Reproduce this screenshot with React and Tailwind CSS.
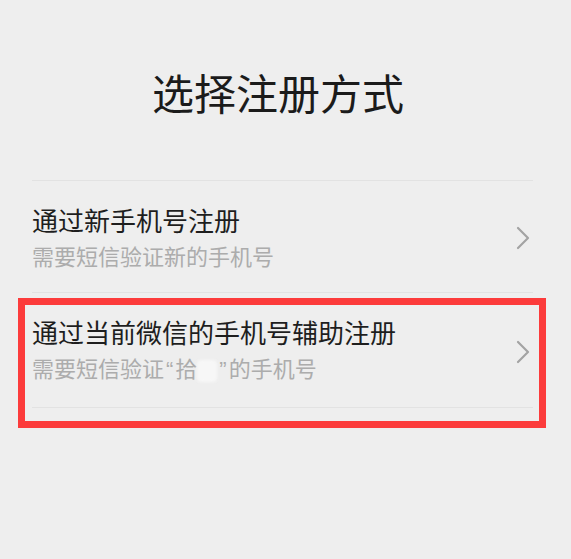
import React from 'react';

const Chevron = () => (
  <svg width="14" height="24" viewBox="0 0 14 24" className="flex-shrink-0">
    <path d="M2 2 L12 12 L2 22" fill="none" stroke="#a3a3a3" strokeWidth="2.2" strokeLinecap="round" strokeLinejoin="round" />
  </svg>
);

const Option = ({ title, subtitle, highlight }) => (
  <div className="relative">
    <div className="flex items-center justify-between pt-[22px] pb-[19px] pr-[3px] border-b border-[#e2e2e2]">
      <div>
        <div className="text-[26px] leading-[34px] text-[#1e1e1e]">{title}</div>
        <div className="text-[22px] leading-[36px] text-[#acacac]">{subtitle}</div>
      </div>
      <Chevron />
    </div>
    {/* red annotation frame */}
    {highlight && (
      <div className="absolute -left-[14px] -right-[13px] top-[5px] -bottom-[20px] border-[7px] border-[#fc3b3b] pointer-events-none" />
    )}
  </div>
);

const Quote = ({ children }) => (
  <span className="px-[2px]" style={{ fontFamily: '"Liberation Sans", sans-serif' }}>{children}</span>
);

const App = () => {
  return (
    <div
      className="w-[571px] h-[559px] bg-[#eeeeee] overflow-hidden"
      style={{ fontFamily: '"Noto Sans CJK SC", "Noto Sans", sans-serif' }}
    >
      <div className="ml-[32px] w-[501px]">
        {/* Header */}
        <h1 className="pt-[71px] pb-[67px] pr-[9px] text-center text-[42px] leading-[42px] text-[#1b1b1b]">
          选择注册方式
        </h1>

        {/* Options */}
        <div className="border-t border-[#e2e2e2]">
          <Option title="通过新手机号注册" subtitle="需要短信验证新的手机号" />
          <Option
            highlight
            title="通过当前微信的手机号辅助注册"
            subtitle={
              <span>
                需要短信验证<Quote>“</Quote>拾
                <span className="inline-block w-[20px] h-[22px] align-middle bg-[#f7f7f7] blur-[1.5px] rounded-sm" />
                <Quote>”</Quote>的手机号
              </span>
            }
          />
        </div>
      </div>
    </div>
  );
};

export default App;
